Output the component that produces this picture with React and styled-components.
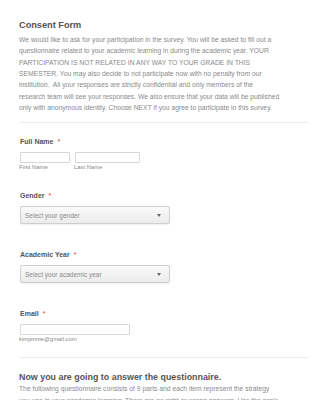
import React from "react";
import styled, { createGlobalStyle } from "styled-components";

const Global = createGlobalStyle`
  html, body { margin: 0; padding: 0; background: #fff; }
  body { font-family: "Liberation Sans", Arial, sans-serif; }
`;

const Page = styled.div`
  width: 325px;
  height: 400px;
  overflow: hidden;
  padding: 0 17px 0 19px;
  box-sizing: border-box;
`;

const Section = styled.section`
  padding-top: ${(p) => p.$top}px;
`;

const Title = styled.h2`
  margin: ${(p) => p.$mt || 0}px 0 0;
  font-size: ${(p) => p.$size}px;
  line-height: 12px;
  font-weight: 700;
  color: #555;
`;

const Body = styled.p`
  margin: ${(p) => p.$mt}px 0 0;
  font-size: 6.75px;
  line-height: 11.35px;
  color: #8a8a8a;
  white-space: nowrap;
`;

const Divider = styled.hr`
  margin: ${(p) => p.$mt}px 0 0;
  border: 0;
  border-top: 1px solid #ececec;
`;

const Field = styled.div`
  margin-top: ${(p) => p.$mt}px;
  padding-left: 1px;
`;

const Label = styled.div`
  font-size: 7px;
  line-height: 9px;
  font-weight: 700;
  color: #555;
  display: flex;
  gap: 4px;
`;

const Req = styled.span`
  color: #e53935;
  font-weight: 400;
`;

const Row = styled.div`
  display: flex;
  gap: 5px;
  margin-top: 6px;
`;

const Col = styled.div`
  display: flex;
  flex-direction: column;
`;

const Input = styled.div`
  width: ${(p) => p.$w}px;
  height: 11px;
  box-sizing: border-box;
  border: 1px solid #d6d6d6;
  border-radius: 1px;
  background: #fff;
`;

const Sub = styled.div`
  margin-top: 1px;
  font-size: 5.9px;
  line-height: 7px;
  color: #8a8a8a;
  margin-left: -1px;
`;

const Select = styled.div`
  margin-top: 6px;
  width: 150px;
  height: 18px;
  box-sizing: border-box;
  border: 1px solid #cfcfcf;
  border-radius: 2px;
  background: linear-gradient(#fafafa, #ececec);
  box-shadow: 0 1px 1px rgba(0, 0, 0, 0.06);
  display: flex;
  align-items: center;
  justify-content: space-between;
  padding: 0 8px 0 4px;
  font-size: 6.5px;
  color: #8a8a8a;
`;

const Arrow = styled.span`
  width: 0;
  height: 0;
  border-left: 2.5px solid transparent;
  border-right: 2.5px solid transparent;
  border-top: 3px solid #666;
`;

export default function App() {
  return (
    <>
      <Global />
      <Page>
        <Section $top={19}>
          <Title $size={9.2}>Consent Form</Title>
          <Body $mt={3}>
            We would like to ask for your participation in the survey. You will be asked to fill out a<br />
            questionnaire related to your academic learning in during the academic year. YOUR<br />
            PARTICIPATION IS NOT RELATED IN ANY WAY TO YOUR GRADE IN THIS<br />
            SEMESTER. You may also decide to not participate now with no penalty from our<br />
            institution.&nbsp; All your responses are strictly confidential and only members of the<br />
            research team will see your responses. We also ensure that your data will be published<br />
            only with anonymous identity. Choose NEXT if you agree to participate in this survey.
          </Body>
          <Divider $mt={9} />
        </Section>

        <Field $mt={14}>
          <Label>Full Name <Req>*</Req></Label>
          <Row>
            <Col>
              <Input $w={50} />
              <Sub>First Name</Sub>
            </Col>
            <Col>
              <Input $w={65} />
              <Sub>Last Name</Sub>
            </Col>
          </Row>
        </Field>

        <Field $mt={20}>
          <Label>Gender <Req>*</Req></Label>
          <Select>
            <span>Select your gender</span>
            <Arrow />
          </Select>
        </Field>

        <Field $mt={26}>
          <Label>Academic Year <Req>*</Req></Label>
          <Select>
            <span>Select your academic year</span>
            <Arrow />
          </Select>
        </Field>

        <Field $mt={26}>
          <Label>Email <Req>*</Req></Label>
          <Row>
            <Col>
              <Input $w={110} />
              <Sub>kimjennie@gmail.com</Sub>
            </Col>
          </Row>
        </Field>

        <Section $top={0}>
          <Divider $mt={14} />
          <Title $size={8.9} $mt={13}>Now you are going to answer the questionnaire.</Title>
          <Body $mt={0}>
            The following questionnaire consists of 9 parts and each item represent the strategy<br />
            you use in your academic learning. There are no right or wrong answers. Use the scale
          </Body>
        </Section>
      </Page>
    </>
  );
}
